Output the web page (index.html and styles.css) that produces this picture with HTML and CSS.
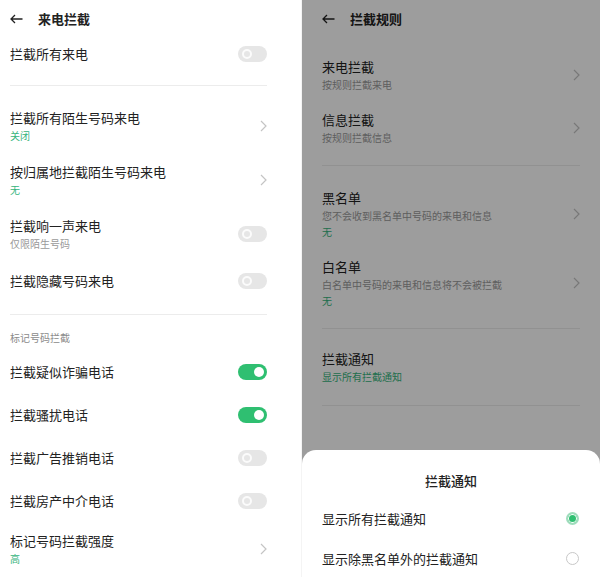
FILE: index.html
```html
<!DOCTYPE html>
<html lang="zh-CN">
<head>
    <meta charset="UTF-8">
    <meta name="viewport" content="width=device-width, initial-scale=1.0">
    <title>来电拦截</title>
    <link rel="stylesheet" href="styles.css">
</head>
<body>
    <div class="screens">
        <!-- left phone: call blocking settings -->
        <section class="screen screen-left">
            <header class="topbar">
                <svg class="back" width="13" height="10" viewBox="0 0 13 10"><path d="M12.5 5H1M5 1L1 5l4 4" fill="none" stroke="#222" stroke-width="1.3"/></svg>
                <h1>来电拦截</h1>
            </header>

            <div class="row row-a">
                <span class="title">拦截所有来电</span>
                <span class="switch"></span>
            </div>
            <div class="divider div-a"></div>

            <div class="row row-two">
                <div class="text"><div class="title">拦截所有陌生号码来电</div><div class="sub green">关闭</div></div>
                <svg class="chev" width="7" height="12" viewBox="0 0 7 12"><path d="M1 1l5 5-5 5" fill="none" stroke="#c4c4c4" stroke-width="1.2"/></svg>
            </div>
            <div class="row row-two">
                <div class="text"><div class="title">按归属地拦截陌生号码来电</div><div class="sub green">无</div></div>
                <svg class="chev" width="7" height="12" viewBox="0 0 7 12"><path d="M1 1l5 5-5 5" fill="none" stroke="#c4c4c4" stroke-width="1.2"/></svg>
            </div>
            <div class="row row-two">
                <div class="text"><div class="title">拦截响一声来电</div><div class="sub">仅限陌生号码</div></div>
                <span class="switch"></span>
            </div>
            <div class="row row-b">
                <span class="title">拦截隐藏号码来电</span>
                <span class="switch"></span>
            </div>
            <div class="divider div-b"></div>

            <div class="section-label">标记号码拦截</div>
            <div class="row row-c">
                <span class="title">拦截疑似诈骗电话</span>
                <span class="switch on"></span>
            </div>
            <div class="row row-c">
                <span class="title">拦截骚扰电话</span>
                <span class="switch on"></span>
            </div>
            <div class="row row-c">
                <span class="title">拦截广告推销电话</span>
                <span class="switch"></span>
            </div>
            <div class="row row-c">
                <span class="title">拦截房产中介电话</span>
                <span class="switch"></span>
            </div>
            <div class="row row-two">
                <div class="text"><div class="title">标记号码拦截强度</div><div class="sub green">高</div></div>
                <svg class="chev" width="7" height="12" viewBox="0 0 7 12"><path d="M1 1l5 5-5 5" fill="none" stroke="#c4c4c4" stroke-width="1.2"/></svg>
            </div>
        </section>

        <!-- right phone: block rules with notification sheet -->
        <section class="screen screen-right">
            <div class="content">
                <header class="topbar topbar-tall">
                    <svg class="back" width="13" height="10" viewBox="0 0 13 10"><path d="M12.5 5H1M5 1L1 5l4 4" fill="none" stroke="#222" stroke-width="1.3"/></svg>
                    <h1>拦截规则</h1>
                </header>

                <div class="row row-r">
                    <div class="text"><div class="title">来电拦截</div><div class="sub">按规则拦截来电</div></div>
                    <svg class="chev" width="7" height="12" viewBox="0 0 7 12"><path d="M1 1l5 5-5 5" fill="none" stroke="#c4c4c4" stroke-width="1.2"/></svg>
                </div>
                <div class="row row-r">
                    <div class="text"><div class="title">信息拦截</div><div class="sub">按规则拦截信息</div></div>
                    <svg class="chev" width="7" height="12" viewBox="0 0 7 12"><path d="M1 1l5 5-5 5" fill="none" stroke="#c4c4c4" stroke-width="1.2"/></svg>
                </div>
                <div class="divider div-r1"></div>

                <div class="row row-list">
                    <div class="text"><div class="title">黑名单</div><div class="sub">您不会收到黑名单中号码的来电和信息</div><div class="sub green">无</div></div>
                    <svg class="chev" width="7" height="12" viewBox="0 0 7 12"><path d="M1 1l5 5-5 5" fill="none" stroke="#c4c4c4" stroke-width="1.2"/></svg>
                </div>
                <div class="row row-list">
                    <div class="text"><div class="title">白名单</div><div class="sub">白名单中号码的来电和信息将不会被拦截</div><div class="sub green">无</div></div>
                    <svg class="chev" width="7" height="12" viewBox="0 0 7 12"><path d="M1 1l5 5-5 5" fill="none" stroke="#c4c4c4" stroke-width="1.2"/></svg>
                </div>
                <div class="divider div-r2"></div>

                <div class="row row-notice">
                    <div class="text"><div class="title">拦截通知</div><div class="sub green">显示所有拦截通知</div></div>
                </div>
                <div class="divider div-r3"></div>
            </div>

            <div class="dim"></div>

            <div class="sheet">
                <div class="sheet-title">拦截通知</div>
                <div class="option">
                    <span>显示所有拦截通知</span>
                    <span class="radio checked"></span>
                </div>
                <div class="option">
                    <span>显示除黑名单外的拦截通知</span>
                    <span class="radio"></span>
                </div>
            </div>
        </section>
    </div>
</body>
</html>
```

FILE: styles.css
```css
body {
    margin: 0;
    background-color: #fff;
    font-family: 'Noto Sans CJK SC', 'Noto Sans', sans-serif;
    color: #222;
    font-size: 13px;
}

.screens {
    display: flex;
    width: 600px;
    height: 577px;
    overflow: hidden;
}

.screen {
    position: relative;
    height: 577px;
    box-sizing: border-box;
}

.screen-left {
    width: 302px;
    padding: 0 34px 0 10px;
    border-right: 1px solid #f4f4f4;
}

.screen-right {
    flex: 1;
    overflow: hidden;
}

.screen-right .content {
    padding: 0 20px;
}

/* header */
.topbar {
    display: flex;
    align-items: center;
    height: 36px;
    padding-top: 1px;
    margin-bottom: 0;
}

.topbar-tall {
    margin-bottom: 11px;
}

.topbar .back {
    margin-right: 15px;
}

.topbar h1 {
    margin: 0;
    font-size: 13px;
    font-weight: 700;
    line-height: 18px;
}

/* rows */
.row {
    display: flex;
    align-items: center;
    justify-content: space-between;
}

.title {
    font-size: 13px;
    line-height: 18px;
}

.sub {
    font-size: 10px;
    line-height: 14px;
    margin-top: 2px;
    color: #9a9a9a;
}

.sub.green {
    color: #35b47c;
}

.row-a {
    height: 34px;
}

.row-two {
    height: 54px;
}

.row-b {
    height: 40px;
}

.row-c {
    height: 43px;
}

.row-r {
    height: 53px;
}

.row-list {
    height: 69px;
}

.row-notice {
    height: 76px;
}

.divider {
    height: 1px;
    background-color: #ececec;
}

.div-a {
    margin: 14px 0 13px;
}

.div-b {
    margin-top: 13px;
}

.div-r1 {
    margin: 11px 0 13px;
}

.div-r2 {
    margin-top: 11px;
}

.section-label {
    font-size: 10px;
    line-height: 14px;
    color: #8a8a8a;
    padding: 16px 0 5px;
}

/* toggle switches */
.switch {
    position: relative;
    width: 29px;
    height: 16px;
    border-radius: 8px;
    background-color: #e6e6e6;
}

.switch::after {
    content: '';
    position: absolute;
    top: 3px;
    left: 4px;
    width: 6px;
    height: 6px;
    border-radius: 50%;
    border: 2px solid #fbfbfb;
}

.switch.on {
    background-color: #2fbf71;
}

.switch.on::after {
    left: auto;
    right: 3px;
    top: 3px;
    width: 10px;
    height: 10px;
    border: none;
    background-color: #fff;
}

/* dim layer + bottom sheet */
.dim {
    position: absolute;
    inset: 0;
    background-color: rgba(0, 0, 0, 0.385);
}

.sheet {
    position: absolute;
    left: 0;
    right: 0;
    top: 450px;
    bottom: 0;
    background-color: #fff;
    border-radius: 14px 14px 0 0;
    padding: 0 20px;
}

.sheet-title {
    text-align: center;
    font-size: 13px;
    font-weight: 500;
    line-height: 18px;
    padding-top: 22px;
    height: 26px;
}

.option {
    display: flex;
    align-items: center;
    justify-content: space-between;
    height: 40px;
    font-size: 13px;
    padding-right: 1px;
}

.radio {
    width: 11px;
    height: 11px;
    border-radius: 50%;
    border: 1px solid #c8c8c8;
    box-sizing: content-box;
}

.radio.checked {
    width: 9px;
    height: 9px;
    border: 2px solid #9fdcbc;
    background-color: #2fbf71;
    box-shadow: inset 0 0 0 1px #fff;
}
```
